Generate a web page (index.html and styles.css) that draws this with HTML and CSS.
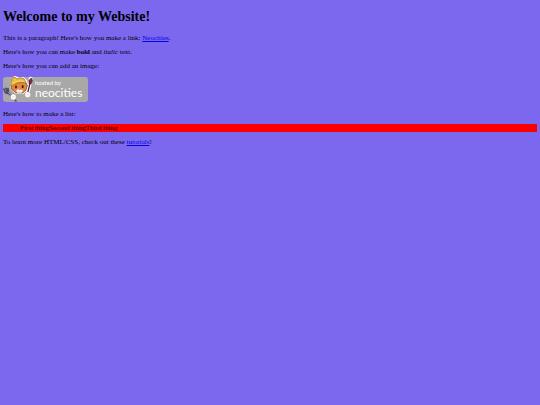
FILE: index.html
```html
<!DOCTYPE html>
<html lang="en">
<head>
  <meta charset="UTF-8">
  <meta name="viewport" content="width=device-width, initial-scale=1.0">
  <title>The web site of</title>
  <link rel="stylesheet" href="styles.css">
</head>
<body>
  <h1>Welcome to my Website!</h1>

  <p>This is a paragraph! Here's how you make a link: <a href="https://neocities.org">Neocities</a>.</p>

  <p>Here's how you can make <strong>bold</strong> and <em>italic</em> text.</p>

  <p>Here's how you can add an image:</p>
  <p>
    <svg class="site-button" viewBox="0 0 85 26" role="img" aria-label="hosted by neocities">
      <rect class="button-bg" x="0" y="1" width="85" height="25" rx="3"/>
      <text class="hosted" x="32" y="9">hosted by</text>
      <text class="brand" x="32" y="21">neocities</text>
      <g transform="translate(-3 -2) scale(.3333)">
        <!-- white sticker edge -->
        <path d="M32 32 36 12 45 7 54 11 72 11 80 20 83 37 78 52 69 59 45 57 34 47Z" fill="#fff" stroke="#fff" stroke-width="3" stroke-linejoin="round"/>
        <path d="M83 58 92 14" fill="none" stroke="#fff" stroke-width="11" stroke-linecap="round"/>
        <!-- head -->
        <path d="M33 34 40 25 75 24 82 34 78 48 68 57 47 56 35 46Z" fill="#e9853a" stroke="#563125" stroke-width="2" stroke-linejoin="round"/>
        <path d="M48 50 58 43 70 50 64 56 52 56Z" fill="#fff1df"/>
        <path d="M48 35v8M68 34v8" stroke="#25191e" stroke-width="5"/>
        <path d="M56 44h7l-4 4z" fill="#713723"/>
        <!-- cap -->
        <path d="M32 32 36 12 45 9 49 15 60 11 72 14 79 28 67 25 49 28 38 36Z" fill="#e9b83d" stroke="#8a6425" stroke-width="2" stroke-linejoin="round"/>
        <path d="M38 27Q54 16 74 23M43 15l5 4" fill="none" stroke="#ffdc68" stroke-width="3"/>
        <!-- fork -->
        <path d="M48 81 24 55M12 45l4 11 10 3-2-15M18 43l4 12" fill="none" stroke="#4b4c60" stroke-width="5" stroke-linecap="round"/>
        <path d="M47 79 24 54" stroke="#a9b4c5" stroke-width="2"/>
        <!-- brush -->
        <path d="M81 66 90 27" stroke="#49303b" stroke-width="4"/>
        <path d="M87 30 87 19 94 12 97 20 93 30Z" fill="#92243b" stroke="#3b2532" stroke-width="2"/>
        <!-- paws -->
        <circle cx="40" cy="69" r="9" fill="#fff" stroke="#755e60" stroke-width="1"/>
        <circle cx="83" cy="62" r="9" fill="#fff" stroke="#755e60" stroke-width="1"/>
        <path d="M36 70q4-4 8 0M79 63q4-4 8 0" fill="none" stroke="#dfbca5" stroke-width="2"/>
      </g>
    </svg>
  </p>

  <p>Here's how to make a list:</p>

  <ul>
    <li>First thing</li>
    <li>Second thing</li>
    <li>Third thing</li>
  </ul>

  <p>To learn more HTML/CSS, check out these <a href="https://neocities.org/tutorials">tutorials</a>!</p>
</body>
</html>
```

FILE: styles.css
```css
body {
  margin: 9px 3px;
  background-color: mediumslateblue;
  color: black;
  font-family: "Liberation Serif", "Times New Roman", serif;
  font-size: 7px;
  line-height: 8px;
}

h1 {
  margin: 0 0 9px;
  font-size: 14px;
  line-height: 16px;
}

p {
  margin: 6px 0;
}

a {
  color: #0000ee;
}

ul {
  display: flex;
  margin: 6px 0;
  padding: 0 0 0 17px;
  background-color: red;
  list-style: none;
}

.site-button {
  width: 85px;
  height: 26px;
}

.button-bg {
  fill: #a8a8a8;
}

.hosted,
.brand {
  fill: white;
  font-family: Lato, sans-serif;
}

.hosted {
  font-size: 6px;
}

.brand {
  font-size: 12px;
}
```
